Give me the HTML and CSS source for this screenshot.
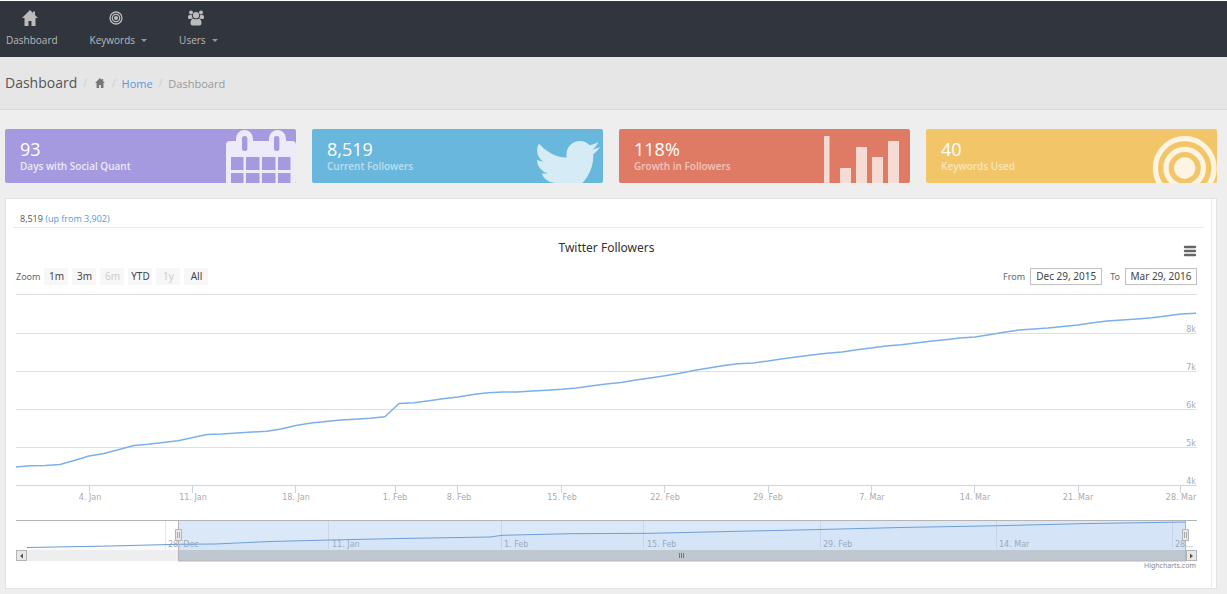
FILE: index.html
```html
<!DOCTYPE html>
<html lang="en">
<head>
<meta charset="utf-8">
<title>Dashboard</title>
<link rel="stylesheet" href="styles.css">
</head>
<body>
<nav class="topnav">
  <a class="nav-item" href="#">
    <svg class="nav-icon" viewBox="0 0 16 16" width="16" height="16"><path d="M8 0 0 8h2.500v8h4v-5h3v5h4V8H16l-3-3V1.500h-2V3z"/></svg>
    <span class="nav-label">Dashboard</span>
  </a>
  <button class="nav-item has-menu" type="button">
    <svg class="nav-icon" viewBox="0 0 16 16" width="16" height="16"><g fill="none" stroke="#bbb" stroke-width="1.300"><circle cx="8" cy="8" r="6"/><circle cx="8" cy="8" r="3.700"/></g><circle cx="8" cy="8" r="2"/></svg>
    <span class="nav-label">Keywords<i class="caret"></i></span>
  </button>
  <button class="nav-item has-menu" type="button">
    <svg class="nav-icon" viewBox="0 0 16 16" width="16" height="16"><circle cx="3" cy="2.500" r="2"/><circle cx="13" cy="2.500" r="2"/><circle cx="8" cy="5.200" r="3.100"/><path d="M0 8V6.500Q0 5 1.500 5h2.300q0 2 1.200 3.200Q3.500 8.300 3 9H1.300Q0 9 0 8zM16 8V6.500Q16 5 14.500 5h-2.300q0 2-1.200 3.200 1.500.1 2 .8h1.700Q16 9 16 8zM2.500 13.500q0-4.800 2.900-4.800Q8 10 10.600 8.700q2.900 0 2.900 4.800 0 2-2 2h-7q-2 0-2-2z"/></svg>
    <span class="nav-label">Users<i class="caret"></i></span>
  </button>
</nav>
<header class="page-head">
  <h1 class="page-title">Dashboard</h1>
  <span class="sep">/</span>
  <svg class="crumb-icon" viewBox="0 0 16 16" width="10" height="10"><path d="M8 0 0 8h2.500v8h4v-5h3v5h4V8H16l-3-3V1.500h-2V3z"/></svg>
  <span class="sep">/</span>
  <a class="crumb-link" href="#">Home</a>
  <span class="sep">/</span>
  <span class="crumb">Dashboard</span>
</header>
<main class="content">
  <section class="cards">
    <article class="card purple">
      <div class="card-text"><strong class="num">93</strong><span class="cap">Days with Social Quant</span></div>
      <svg class="card-art" viewBox="0 0 96 54" width="96" height="54"><path fill-rule="evenodd" d="M26 54V16q0-4 4-4h6V9.500a8.300 8.300 0 0 1 17 0V12h16V9.500a8.300 8.300 0 0 1 17 0V12h6q4 0 4 4v38zM42 9.500v10q0 2.500 2.700 2.500t2.700-2.500v-10Q47.400 7 44.700 7T42 9.500zM74 9.500v10q0 2.500 2.700 2.500t2.700-2.500v-10Q79.400 7 76.700 7T74 9.500zM31 28v13h12.500V28zM46 28v13h13.500V28zM62 28v13h13.500V28zM78 28v13h12.500V28zM31 44v10h12.500V44zM46 44v10h13.500V44zM62 44v10h13.500V44zM78 44v10h12.500V44z"/></svg>
    </article>
    <article class="card blue">
      <div class="card-text"><strong class="num">8,519</strong><span class="cap">Current Followers</span></div>
      <svg class="card-art" viewBox="0 0 96 54" width="96" height="54"><path transform="translate(25.500 1.300) scale(.0417)" d="M1620 408q-67 98-162 167 1 14 1 42 0 130-38 259.500t-115.500 248.500-184.500 210.500-258 146-323 54.500q-271 0-496-145 35 4 78 4 225 0 401-138-105-2-188-64.500t-114-159.500q33 5 61 5 43 0 85-11-112-23-185.500-111.500t-73.500-205.500v-4q68 38 146 41-66-44-105-115t-39-154q0-88 44-163 121 149 294.500 238.500t371.500 99.500q-8-38-8-74 0-134 94.500-228.500t228.500-94.500q140 0 236 102 109-21 205-78-37 115-142 178 93-10 186-50z"/></svg>
    </article>
    <article class="card red">
      <div class="card-text"><strong class="num">118%</strong><span class="cap">Growth in Followers</span></div>
      <svg class="card-art" viewBox="0 0 96 54" width="96" height="54"><path d="M10 7h5.500v47H10zM26 39h11v15H26zM42 18h11v36H42zM58 28h11v26H58zM74 12h11v42H74z"/></svg>
    </article>
    <article class="card yellow">
      <div class="card-text"><strong class="num">40</strong><span class="cap">Keywords Used</span></div>
      <svg class="card-art" viewBox="0 0 96 54" width="96" height="54"><g fill="none" stroke="#fff" stroke-width="5.300"><circle cx="63.700" cy="39" r="29.300"/><circle cx="63.700" cy="39" r="18.700"/></g><circle cx="63.700" cy="39" r="10.700"/></svg>
    </article>
  </section>
  <section class="panel">
    <div class="panel-body">
      <div class="summary">8,519 <a href="#">(up from 3,902)</a></div>
      <div class="chart-head">
        <h2 class="chart-title">Twitter Followers</h2>
        <button class="menu-btn" type="button" aria-label="Chart menu"><svg viewBox="0 0 14 12" width="14" height="12"><path d="M2 2h10M2 6h10M2 10h10" stroke="#666" stroke-width="2.400" stroke-linecap="round"/></svg></button>
      </div>
      <div class="range">
        <span class="range-label">Zoom</span>
        <button class="zoom" type="button">1m</button>
        <button class="zoom" type="button">3m</button>
        <button class="zoom" type="button" disabled>6m</button>
        <button class="zoom" type="button">YTD</button>
        <button class="zoom" type="button" disabled>1y</button>
        <button class="zoom" type="button">All</button>
        <label class="from" for="from">From</label>
        <input class="date" id="from" type="text" value="Dec 29, 2015">
        <label class="to" for="to">To</label>
        <input class="date" id="to" type="text" value="Mar 29, 2016">
      </div>
      <svg class="chart" viewBox="16 290 1181 282">
        <path class="grid" d="M16 294.500H1197M16 333.500H1197M16 371.500H1197M16 409.500H1197M16 447.500H1197"/>
        <path class="axis" d="M16 485.500H1197M89.500 486v7M192.500 486v7M295.500 486v7M395.500 486v7M457.500 486v7M561.500 486v7M664.500 486v7M768.500 486v7M871.500 486v7M974.500 486v7M1078.500 486v7M1180.500 486v7"/>
        <g class="tick end"><text x="1196" y="332">8k</text><text x="1196" y="370">7k</text><text x="1196" y="408">6k</text><text x="1196" y="446">5k</text><text x="1196" y="484">4k</text></g>
        <g class="tick mid"><text x="90" y="500">4. Jan</text><text x="193" y="500">11. Jan</text><text x="296" y="500">18. Jan</text><text x="395" y="500">1. Feb</text><text x="459" y="500">8. Feb</text><text x="562" y="500">15. Feb</text><text x="665" y="500">22. Feb</text><text x="768" y="500">29. Feb</text><text x="872" y="500">7. Mar</text><text x="975" y="500">14. Mar</text><text x="1078" y="500">21. Mar</text><text x="1181" y="500">28. Mar</text></g>
        <polyline class="series" points="16,467 30,465.800 45,465.500 60,464.500 75,460.300 89,456 104,453.500 119,449.500 134,445.500 148,444.300 163,442.500 178,440.700 193,437.500 207,434.600 222,434 237,433 252,432 267,431.300 281,429 296,425.500 311,423 326,421.500 341,420 355,419.200 370,418.200 385,416.800 399,403.500 414,402.800 429,400.700 443,398.700 458,397 473,394.500 488,392.700 503,392 517,392 532,391 547,390.200 562,389.200 576,387.900 591,386 606,384 621,382.500 636,380 650,378 665,375.700 680,373.200 695,370.300 709,367.900 724,365.500 738,363.700 753,362.900 768,361 783,358.700 798,356.700 812,354.900 827,353.300 842,352 857,349.700 871,348 886,346 901,344.700 916,343 930,341.200 945,339.700 960,338 975,337 989,334.700 1004,332.200 1019,330 1034,328.900 1048,328 1063,326.500 1078,325 1093,322.800 1107,321 1122,320 1137,319 1152,317.700 1166,315.900 1181,314 1196,313.300"/>
        <path class="nav-grid" d="M165.500 521v28M328.500 521v28M501.500 521v28M643.500 521v28M820.500 521v28M996.500 521v28M1172.500 521v28"/>
        <g class="tick"><text x="168" y="547">28. Dec</text><text x="332" y="547">11. Jan</text><text x="504" y="547">1. Feb</text><text x="647" y="547">15. Feb</text><text x="823" y="547">29. Feb</text><text x="999" y="547">14. Mar</text><text x="1175" y="547">28…</text></g>
        <path class="nav-area" d="M27 547.500 110 546 178 544 215 544 270 541.500 330 540 400 538.500 490 537 502 535.300 570 533.700 650 533.300 720 531.700 820 529.500 900 527.500 1000 525.700 1080 523.700 1185 522V550H27z"/>
        <path class="nav-line" d="M27 547.500 110 546 178 544.300 215 544 270 541.500 330 540 400 538.500 490 537 502 535.300 570 533.700 650 533.300 720 531.700 820 529.500 900 527.500 1000 525.700 1080 523.700 1185 522"/>
        <rect class="mask" x="178" y="521" width="1008" height="29"/>
        <rect x="16" y="550" width="1181" height="11" fill="#eee"/>
        <rect x="178" y="550" width="1008" height="11" fill="#bfc8d1"/>
        <path d="M16 520.500H1197M178 561H1186M178.500 521v40M1185.500 521v40" fill="none" stroke="#b4b4b8"/>
        <g fill="#ebe7e8" stroke="#b4b4b4"><rect x="16.500" y="550.500" width="10" height="10"/><rect x="1186.500" y="550.500" width="10" height="10"/><path d="M175.500 529.500h6v11h-6zM1182.500 529.500h6v11h-6z"/></g>
        <path d="M177.500 532v6M179.500 532v6M1184.500 532v6M1186.500 532v6" stroke="#aaa"/>
        <path d="M23 553.500v5l-3-2.500zM1190 553.500v5l3-2.500z" fill="#555"/>
        <path d="M679.500 553v5M681.500 553v5M683.500 553v5" stroke="#777"/>
        <text class="credit" x="1196" y="568">Highcharts.com</text>
      </svg>
    </div>
  </section>
</main>
</body>
</html>
```
FILE: styles.css
```css
* { box-sizing: border-box; }
body { margin: 0; padding-top: 1px; background: #eee; font-family: "Open Sans", "Noto Sans", sans-serif; color: #555; }
a { text-decoration: none; }
button { border: 0; padding: 0; font-family: inherit; }
.topnav { display: flex; gap: 32px; height: 56px; padding: 9px 6px 0; background: #31353e; box-shadow: 0 -1px #fff; }
.nav-item { display: flex; flex-direction: column; align-items: center; justify-content: flex-start; gap: 6px; background: none; color: #bbb; }
.nav-icon { display: block; margin-right: 4px; fill: #bbb; }
.nav-label { display: flex; align-items: center; font-size: 10px; line-height: 16px; }
.caret { margin-left: 6px; border: 3px solid transparent; border-top-color: #999; border-bottom: 0; }
.page-head { display: flex; align-items: center; height: 53px; padding: 0 5px; background: #e6e6e6; border-bottom: 1px solid #d9d9d9; font-size: 11px; }
.page-title { margin: 0; padding-bottom: 2px; font-size: 14px; font-weight: 400; color: #555; }
.sep { padding: 0 6px; color: #ccc; font-size: 10px; }
.crumb-icon { fill: #777; margin: 0 1px 0 2px; }
.crumb-link { color: #5a96dd; }
.crumb { color: #999; }
.content { padding: 19px 10px 5px 5px; }
.cards { display: grid; grid-template-columns: repeat(4, 1fr); gap: 16px; }
.card { display: flex; justify-content: space-between; height: 54px; padding-left: 15px; border-radius: 2px; overflow: hidden; color: #fff; }
.purple { background: #a59ae0; }
.blue { background: #69b7dd; }
.red { background: #df7b64; }
.yellow { background: #f2c569; }
.card-text { display: flex; flex-direction: column; padding-top: 10px; white-space: nowrap; }
.num { font-size: 18px; line-height: 20px; font-weight: 500; }
.cap { font-size: 10px; line-height: 14px; font-weight: 600; opacity: .55; }
.purple .cap { opacity: .8; }
.card-art { flex: none; fill: #fff; opacity: .8; }
.blue .card-art, .red .card-art { opacity: .72; }
.panel { margin-top: 15px; padding: 0 4px 1px 0; background: #fff; border: 1px solid #e2e2e2; }
.panel-body { padding: 12px 14px 15px 10px; border-right: 1px solid #e8e8e8; }
.summary { margin: 0 -7px 0 -3px; padding: 0 0 1px 7px; border-bottom: 1px solid #eaeaea; font-size: 9px; line-height: 15px; font-weight: 500; }
.summary a { color: #5a96dd; }
.chart-head { display: grid; grid-template-columns: 20px 1fr 20px; align-items: center; height: 40px; padding-bottom: 2px; }
.chart-title { grid-column: 2; margin: 0; text-align: center; font: 400 12px "Noto Sans", sans-serif; color: #333; }
.menu-btn { display: flex; justify-content: flex-end; padding-top: 8px; background: none; }
.range { display: flex; align-items: center; gap: 4px; height: 17px; font: 9px "Noto Sans", sans-serif; color: #666; }
.zoom { width: 24px; height: 17px; padding-bottom: 2px; background: #f7f7f7; color: #444; font-size: 10px; }
.zoom:disabled { color: #ccc; }
.from { margin-left: auto; padding-right: 1px; }
.to { margin-left: 4px; padding-right: 1px; }
.date { width: 72px; height: 17px; padding: 0 0 2px; border: 1px solid #c0c0c0; background: #fff; text-align: center; font: 10px "Noto Sans", sans-serif; color: #444; }
.chart { display: block; width: 100%; margin-top: 5px; overflow: visible; }
.grid { fill: none; stroke: #e0e0e0; }
.axis { fill: none; stroke: #c8d6e6; }
.series { fill: none; stroke: #7cb0e8; stroke-width: 1.5; stroke-linejoin: round; }
.tick { font: 8px "DejaVu Sans", sans-serif; fill: #aaa; }
.mid { text-anchor: middle; }
.end { text-anchor: end; }
.nav-grid { stroke: #e8e8e8; }
.nav-area { fill: #7cb0e8; fill-opacity: .05; }
.nav-line { fill: none; stroke: #6e9bd0; }
.mask { fill: #78aae6; fill-opacity: .27; }
.credit { font: 7px "Noto Sans", sans-serif; fill: #888; text-anchor: end; }
```
